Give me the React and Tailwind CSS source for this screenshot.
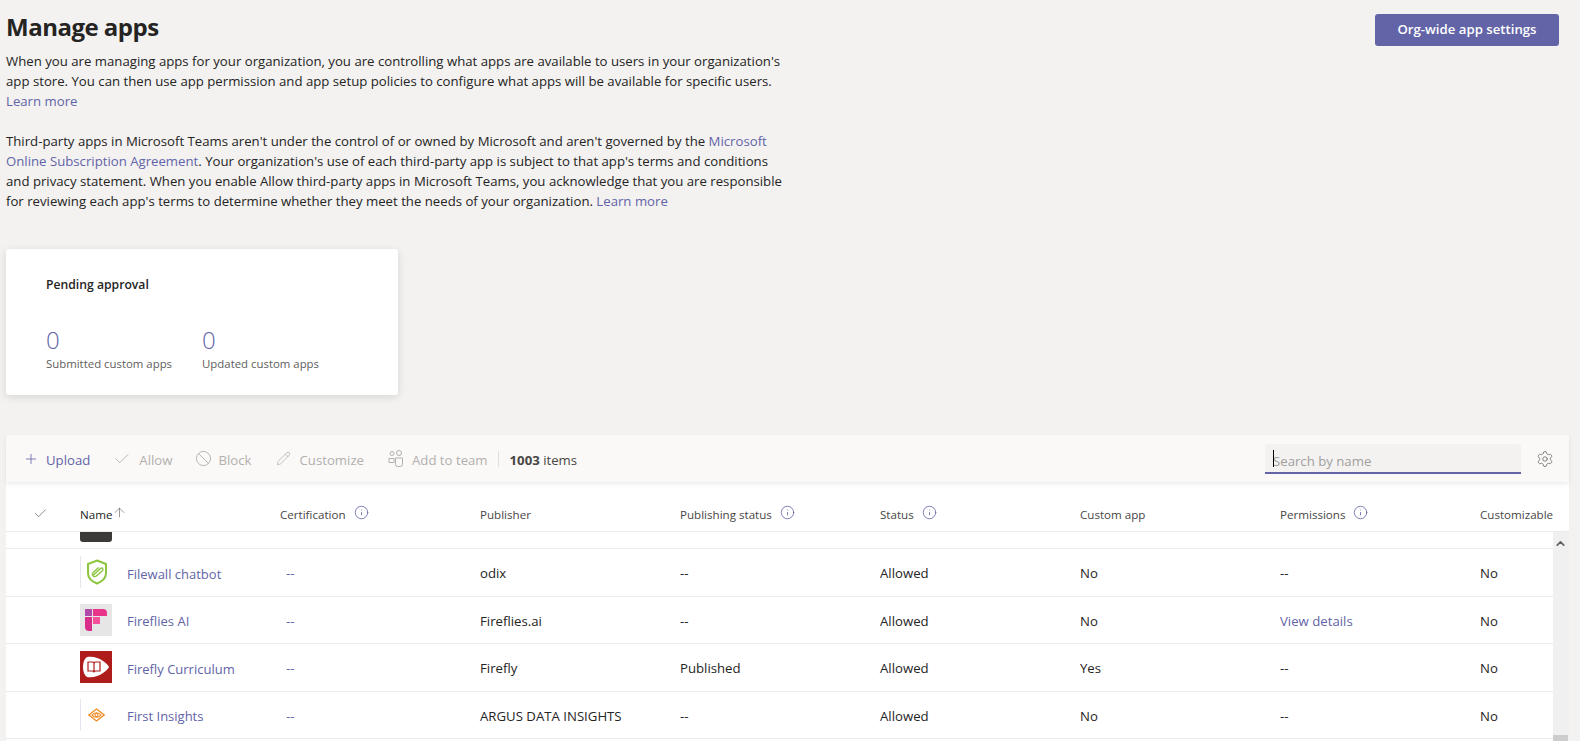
import { Plus, Check, Ban, Pencil, Settings, Info, ArrowUp, ChevronUp } from 'lucide-react';

const columns = [
  { label: 'Certification', info: true },
  { label: 'Publisher' },
  { label: 'Publishing status', info: true },
  { label: 'Status', info: true },
  { label: 'Custom app' },
  { label: 'Permissions', info: true },
  { label: 'Customizable' },
];

const FilewallIcon = () => (
  <div className="w-8 h-8 bg-white border-l border-[#e6e6f0] flex items-center justify-center">
    <svg width="22" height="26" viewBox="0 0 22 26" fill="none" stroke="#8cc63f" strokeWidth="2">
      <path d="M11 1.500 20 5v9c0 5-4 8.500-9 10.500C6 22.500 2 19 2 14V5z" />
      <path d="M7.500 16 14.500 9.500c1.800-1.400 3.300.8 1.900 2.300l-6 5.200c-2.300 1.600-5-.8-3.500-3.200l5.800-5.300" strokeWidth="1.400" />
    </svg>
  </div>
);

const FirefliesIcon = () => (
  <div className="w-8 h-8 bg-[#e6e6e6] flex items-center justify-center">
    <svg width="22" height="22" viewBox="0 0 22 22">
      <rect x="0" y="0" width="7" height="7" fill="#b04aa8" />
      <path d="M8 0h10a4 4 0 0 1 4 4v3H8z" fill="#e8358c" />
      <path d="M0 8h7v14H4a4 4 0 0 1-4-4z" fill="#d92d8a" />
      <rect x="8" y="8" width="7" height="7" fill="#f7509a" />
    </svg>
  </div>
);

const FireflyIcon = () => (
  <div className="w-8 h-8 bg-[#ae1c1c] flex items-center justify-center">
    <svg width="28" height="22" viewBox="0 0 28 22">
      <path d="M5 1c6-1 12 1 16 4 3 2 5 4 6 6-1 2-3 4-6 6-4 3-10 5-16 4C2 19 1 15 1 11S2 3 5 1z" fill="#fff" />
      <path d="M6 6h5l1 1 1-1h5v9h-5l-1 1-1-1H6zM12 7v8" fill="none" stroke="#ae1c1c" strokeWidth="1.200" />
    </svg>
  </div>
);

const InsightsIcon = () => (
  <div className="w-8 h-8 bg-white border-l border-[#e6e6f0] flex items-center justify-center">
    <svg width="17" height="14" viewBox="0 0 17 14" fill="none" stroke="#f08a24" strokeWidth="1.200">
      <path d="M.8 7 8.500 1l7.700 6-7.700 6z" />
      <path d="M4 7c2-3 7-3 9 0-2 3-7 3-9 0z" />
      <circle cx="8.500" cy="7" r="1.500" />
    </svg>
  </div>
);

const rows = [
  { icon: FilewallIcon, name: 'Filewall chatbot', publisher: 'odix', pub: '--', custom: 'No', perms: '--' },
  { icon: FirefliesIcon, name: 'Fireflies AI', publisher: 'Fireflies.ai', pub: '--', custom: 'No', perms: 'View details' },
  { icon: FireflyIcon, name: 'Firefly Curriculum', publisher: 'Firefly', pub: 'Published', custom: 'Yes', perms: '--' },
  { icon: InsightsIcon, name: 'First Insights', publisher: 'ARGUS DATA INSIGHTS', pub: '--', custom: 'No', perms: '--' },
];

const Link = ({ children }) => <span className="text-[#6264a7]">{children}</span>;

export default function App() {
  return (
    <div className="h-[741px] overflow-hidden bg-[#f3f2f1] text-[#252423] text-[13.2px] font-['Open_Sans',sans-serif]">

      {/* header */}
      <div className="flex justify-between h-[249px]">
        <div className="pl-1.5 pt-[11px]">
          <h1 className="text-[24px] leading-8 font-bold tracking-[-0.5px] mb-[8px]">Manage apps</h1>
          <p className="leading-5 mb-5 whitespace-nowrap">
            When you are managing apps for your organization, you are controlling what apps are available to users in your organization's<br />
            app store. You can then use app permission and app setup policies to configure what apps will be available for specific users.<br />
            <Link>Learn more</Link>
          </p>
          <p className="leading-5 whitespace-nowrap">
            Third-party apps in Microsoft Teams aren't under the control of or owned by Microsoft and aren't governed by the <Link>Microsoft</Link><br />
            <Link>Online Subscription Agreement</Link>. Your organization's use of each third-party app is subject to that app's terms and conditions<br />
            and privacy statement. When you enable Allow third-party apps in Microsoft Teams, you acknowledge that you are responsible<br />
            for reviewing each app's terms to determine whether they meet the needs of your organization. <Link>Learn more</Link>
          </p>
        </div>
        <button className="mt-3.5 mr-[21px] w-[184px] h-8 bg-[#6264a7] text-white font-semibold rounded-[3px] shrink-0">
          Org-wide app settings
        </button>
      </div>

      {/* pending card */}
      <div className="ml-1.5 w-[392px] h-[146px] bg-white rounded-[3px] shadow-[0_2px_8px_rgba(0,0,0,0.12)] pl-10 pt-[26px]">
        <div className="text-[12.2px] leading-5 font-semibold">Pending approval</div>
        <div className="flex gap-[30px] mt-[31px]">
          <div>
            <div className="text-[24px] leading-7 font-light text-[#6264a7]">0</div>
            <div className="text-[11.4px] leading-5 text-[#605e5c]">Submitted custom apps</div>
          </div>
          <div>
            <div className="text-[24px] leading-7 font-light text-[#6264a7]">0</div>
            <div className="text-[11.4px] leading-5 text-[#605e5c]">Updated custom apps</div>
          </div>
        </div>
      </div>

      {/* table */}
      <div className="ml-1.5 mt-10 w-[1563px] bg-white rounded-t-[3px]">
        <div className="relative h-[47px] bg-[#faf9f8] rounded-t-[3px] shadow-[0_2px_4px_rgba(0,0,0,0.08)] flex items-center pt-[5px] pl-[17px] text-[#b3b0ad] whitespace-nowrap">
          <Plus size={16} strokeWidth={1.2} className="text-[#6264a7] -mt-[5px]" />
          <span className="ml-[7px] text-[#6264a7]">Upload</span>
          <Check size={18} strokeWidth={1.200} className="ml-[23px] -mt-[5px]" />
          <span className="ml-2">Allow</span>
          <Ban size={17} strokeWidth={1.300} className="ml-[22px] -mt-[5px]" />
          <span className="ml-[7px]">Block</span>
          <Pencil size={15} strokeWidth={1.200} className="ml-[24px] -mt-[5px]" />
          <span className="ml-[9px]">Customize</span>
          <svg width="16" height="17" viewBox="0 0 16 17" fill="none" stroke="currentColor" className="ml-[24px] -mt-[5px]">
            <circle cx="4" cy="3.500" r="2" />
            <circle cx="11" cy="3" r="2.500" />
            <path d="M1 8.500h5v4H1zM7.500 8h7v6.500a2 2 0 0 1-2 2h-3a2 2 0 0 1-2-2z" />
          </svg>
          <span className="ml-2">Add to team</span>
          <span className="ml-[10px] w-px h-4 bg-[#e1dfdd] -mt-[5px]" />
          <span className="ml-[11px] text-[#484644]"><b className="font-bold">1003</b> items</span>
          <div className="ml-auto -mt-[5px] relative w-[256px] h-[30px] bg-[#f3f2f1] rounded-t-[3px] border-b-2 border-[#6264a7] flex items-center pt-[9px] pl-2 text-[#a19f9d]">
            <span className="absolute left-2 top-[6px] w-px h-[17px] bg-black" />
            Search by name
          </div>
          <Settings size={18} strokeWidth={1} className="mr-[15px] ml-[15px] -mt-[5px] text-[#605e5c]" />
        </div>

        {/* column header */}
        <div className="h-[50px] flex items-center pt-[17px] border-b border-[#edebe9] text-[11.6px] text-[#484644] whitespace-nowrap">
          <div className="w-[74px] shrink-0 pl-[27px]">
            <Check size={15} strokeWidth={1} className="-mt-1" />
          </div>
          <div className="w-[200px] shrink-0 flex items-center text-[#252423]">
            Name <ArrowUp size={15} strokeWidth={1} className="text-[#605e5c] -mt-1" />
          </div>
          {columns.map((c) => (
            <div key={c.label} className="w-[200px] shrink-0 flex items-center gap-2">
              {c.label}
              {c.info && <Info size={15} strokeWidth={1.3} className="text-[#6264a7] -mt-1" />}
            </div>
          ))}
        </div>

        {/* scroller */}
        <div className="flex h-[210px] overflow-hidden">
          <div className="flex-1 min-w-0">
            <div className="h-[17px] border-b border-[#edebe9] pl-[74px]">
              <div className="w-8 h-[10px] bg-[#3b3a39] rounded-b-[3px]" />
            </div>
            {rows.map((r) => (
              <div key={r.name} className="h-[47.500px] border-b border-[#edebe9] flex items-center whitespace-nowrap">
                <div className="w-[74px] shrink-0" />
                <div className="w-[200px] shrink-0 flex items-center gap-[15px] text-[#6264a7] text-[13px]">
                  <r.icon />
                  <span className="pt-1">{r.name}</span>
                </div>
                <div className="w-[200px] shrink-0 pt-1 pl-[6px] text-[#6264a7]">--</div>
                <div className="w-[200px] shrink-0 pt-1">{r.publisher}</div>
                <div className="w-[200px] shrink-0 pt-1">{r.pub}</div>
                <div className="w-[200px] shrink-0 pt-1">Allowed</div>
                <div className="w-[200px] shrink-0 pt-1">{r.custom}</div>
                <div className={`w-[200px] shrink-0 pt-1 ${r.perms === '--' ? '' : 'text-[#6264a7]'}`}>{r.perms}</div>
                <div className="pt-1">No</div>
              </div>
            ))}
          </div>
          <div className="w-4 bg-[#f0f0f0] relative shrink-0">
            <ChevronUp size={13} strokeWidth={3} className="absolute left-[1px] top-[5px] text-[#605e5c]" />
            <div className="absolute left-0 right-px top-[203px] h-2 bg-[#cdcdcd]" />
          </div>
        </div>
      </div>
    </div>
  );
}
